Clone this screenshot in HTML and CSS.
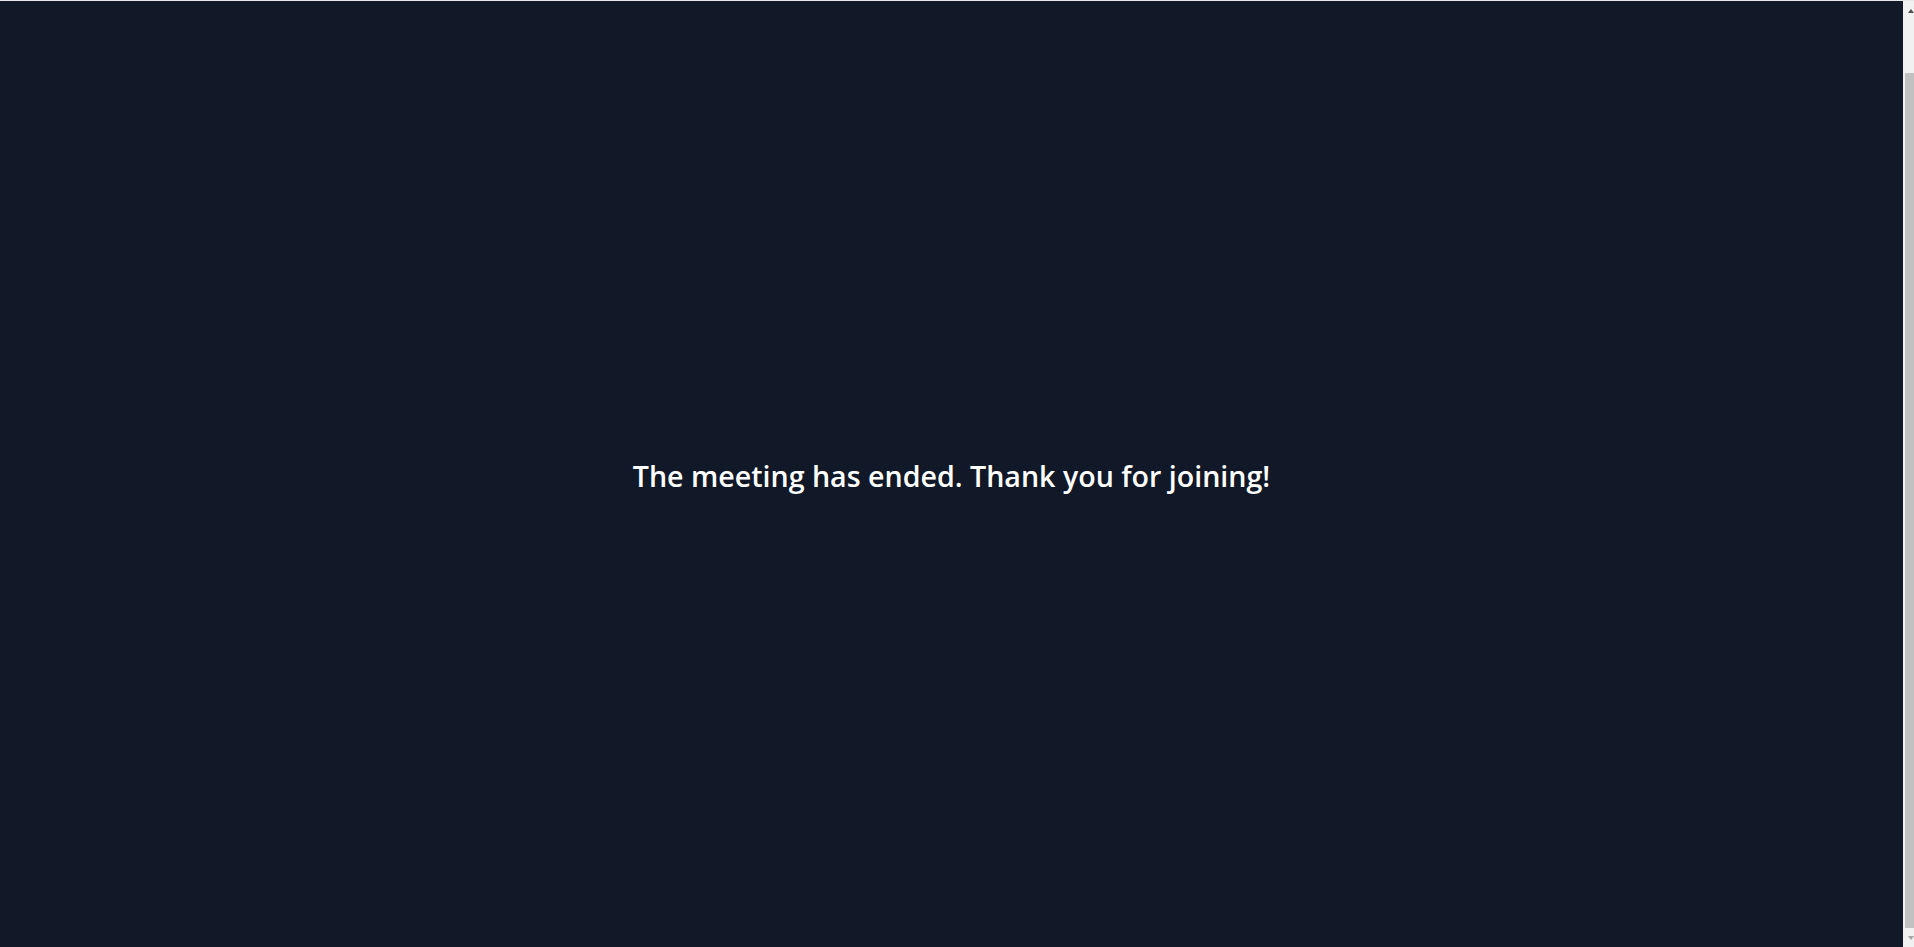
FILE: index.html
```html
<!DOCTYPE html>
<html lang="en">
<head>
<meta charset="utf-8">
<title>Meeting ended</title>
<link rel="stylesheet" href="styles.css">
</head>
<body>
<div class="topline"></div>
<div class="frame">
  <main class="screen">
    <h1 class="message">The meeting has ended. Thank you for joining!</h1>
  </main>
  <div class="scrollbar" aria-hidden="true">
    <div class="sb-btn sb-up"><span class="tri-up"></span></div>
    <div class="sb-track"><div class="sb-thumb"></div></div>
    <div class="sb-btn sb-down"><span class="tri-down"></span></div>
  </div>
</div>
</body>
</html>
```

FILE: styles.css
```css
html, body {
  margin: 0;
  padding: 0;
  height: 100%;
  overflow: hidden;
}
body {
  display: flex;
  flex-direction: column;
  background: #111827;
  font-family: "Open Sans", "Noto Sans", sans-serif;
}
.topline {
  height: 1px;
  background: #e6e7eb;
  flex: none;
}
.frame {
  flex: 1;
  display: flex;
  min-height: 0;
}
.screen {
  flex: 1;
  display: flex;
  align-items: center;
  justify-content: center;
  padding-top: 4px;
  background: #111827;
}
.message {
  margin: 0;
  color: #ffffff;
  font-size: 28.6px;
  font-weight: 600;
  line-height: 1.3;
}
.scrollbar {
  width: 11px;
  flex: none;
  background: #f1f1f1;
  display: flex;
  flex-direction: column;
}
.sb-btn {
  height: 17px;
  flex: none;
  display: flex;
  padding-left: 5px;
  box-sizing: border-box;
}
.sb-up {
  align-items: flex-start;
  padding-top: 8px;
}
.sb-down {
  align-items: flex-end;
  padding-bottom: 7px;
}
.tri-up {
  width: 0;
  height: 0;
  border-left: 3.5px solid transparent;
  border-right: 3.5px solid transparent;
  border-bottom: 4px solid #505050;
}
.tri-down {
  width: 0;
  height: 0;
  border-left: 3.5px solid transparent;
  border-right: 3.5px solid transparent;
  border-top: 4px solid #a3a3a3;
}
.sb-track {
  flex: 1;
  display: flex;
  flex-direction: column;
  padding: 55px 0 2px 2px;
}
.sb-thumb {
  flex: 1;
  background: #c1c1c1;
}
```
